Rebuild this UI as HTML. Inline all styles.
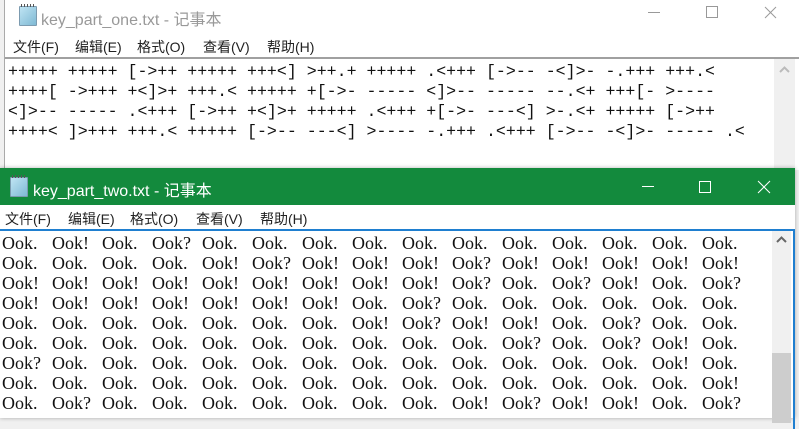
<!DOCTYPE html>
<html><head><meta charset="utf-8"><style>
*{margin:0;padding:0;box-sizing:border-box}
body{width:799px;height:412px;overflow:hidden;background:#f0f0f0;position:relative;font-family:"Liberation Sans","Noto Sans CJK SC",sans-serif}
.w1{position:absolute;left:4px;top:0;width:800px;height:170px;background:#fff;border-left:1px solid #aaa}
.title{position:absolute;left:0;top:0;right:0;height:35px;font-size:16px;color:#999;}
.title span{position:absolute;left:36px;top:6px}
.icon{position:absolute;left:14px;top:6px;width:18px;height:20px;background:linear-gradient(135deg,#bfe4f3,#7fb9d4);border:1px solid #7c9bb0;border-radius:1px}
.icon:before{content:"";position:absolute;left:1px;top:-3px;width:14px;height:3px;background:repeating-linear-gradient(90deg,#555 0 1px,transparent 1px 3px)}
.menu{position:absolute;left:0;right:0;font-size:14px;color:#222;white-space:pre;word-spacing:0}
.menu b{font-weight:normal;position:absolute}
.t1{position:absolute;left:0;top:57px;width:800px;height:113px;border-top:2px solid #a0a0a0;background:#fff}
.t1 pre{position:absolute;left:3px;top:3px;font-family:"Liberation Mono",monospace;font-size:16.6px;line-height:20px;color:#111;letter-spacing:0}
.sb1{position:absolute;left:774px;top:59px;width:21px;height:110px;background:#f0f0f0}
.w2{position:absolute;left:0;top:168px;width:795px;height:250px;background:#fff;box-shadow:0 0 4px rgba(0,0,0,.3)}
.tb2{position:absolute;left:0;top:0;right:0;height:37px;background:#138a3d;color:#fff;font-size:16px}
.tb2 span{position:absolute;left:33px;top:9px}
.m2{position:absolute;top:37px;left:0;right:0;height:24px;background:#fff}
.t2{position:absolute;left:0;top:61px;width:795px;height:200px;border-top:2px solid #1f7fd0;border-right:2px solid #1f7fd0}
.row{position:absolute;left:2px;height:20px;font-family:"Liberation Serif",serif;font-size:18px;color:#111;white-space:nowrap}
.row i{font-style:normal;display:inline-block;width:50px}
.sb2{position:absolute;left:772px;top:63px;width:19px;height:190px;background:#f0f0f0}
.thumb{position:absolute;left:0;top:122px;width:19px;height:70px;background:#cdcdcd}
</style></head><body>
<div class="w1">
 <div class="title"><div class="icon"></div><span>key_part_one.txt - 记事本</span>
  <svg style="position:absolute;left:0;top:0" width="799" height="35"><g stroke="#999" stroke-width="1" fill="none"><line x1="643" y1="12.5" x2="655" y2="12.5"/><rect x="701.5" y="6.5" width="11" height="11"/><line x1="760" y1="7" x2="771" y2="18"/><line x1="771" y1="7" x2="760" y2="18"/></g></svg>
 </div>
 <div class="menu" style="top:37px"><b style="left:8px">文件(F)</b><b style="left:70px">编辑(E)</b><b style="left:132px">格式(O)</b><b style="left:198px">查看(V)</b><b style="left:262px">帮助(H)</b></div>
 <div class="t1"><pre>+++++ +++++ [->++ +++++ +++<] >++.+ +++++ .<+++ [->-- -<]>- -.+++ +++.<
++++[ ->+++ +<]>+ +++.< +++++ +[->- ----- <]>-- ----- --.<+ +++[- >----
<]>-- ----- .<+++ [->++ +<]>+ +++++ .<+++ +[->- ---<] >-.<+ +++++ [->++
++++< ]>+++ +++.< +++++ [->-- ---<] >---- -.+++ .<+++ [->-- -<]>- ----- .<</pre></div>
</div>
<div class="sb1"><svg width="21" height="20"><path d="M6 13 L10.5 8.5 L15 13" stroke="#bbb" stroke-width="2" fill="none"/></svg></div>
<div class="w2">
 <div class="tb2"><div class="icon" style="left:10px;top:9px"></div><span>key_part_two.txt - 记事本</span>
  <svg style="position:absolute;left:0;top:0" width="795" height="37"><g stroke="#fff" stroke-width="1" fill="none"><line x1="642" y1="18.5" x2="654" y2="18.5"/><rect x="699.5" y="13.5" width="11" height="11"/><line x1="758" y1="13" x2="770" y2="25"/><line x1="770" y1="13" x2="758" y2="25"/></g></svg>
 </div>
 <div class="menu m2"><b style="left:5px;top:4px">文件(F)</b><b style="left:68px;top:4px">编辑(E)</b><b style="left:130px;top:4px">格式(O)</b><b style="left:196px;top:4px">查看(V)</b><b style="left:260px;top:4px">帮助(H)</b></div>
 <div class="t2"></div>
 <div class="row" style="top:65px"><i>Ook.</i><i>Ook!</i><i>Ook.</i><i>Ook?</i><i>Ook.</i><i>Ook.</i><i>Ook.</i><i>Ook.</i><i>Ook.</i><i>Ook.</i><i>Ook.</i><i>Ook.</i><i>Ook.</i><i>Ook.</i><i>Ook.</i></div>
 <div class="row" style="top:85px"><i>Ook.</i><i>Ook.</i><i>Ook.</i><i>Ook.</i><i>Ook!</i><i>Ook?</i><i>Ook!</i><i>Ook!</i><i>Ook!</i><i>Ook?</i><i>Ook!</i><i>Ook!</i><i>Ook!</i><i>Ook!</i><i>Ook!</i></div>
 <div class="row" style="top:105px"><i>Ook!</i><i>Ook!</i><i>Ook!</i><i>Ook!</i><i>Ook!</i><i>Ook!</i><i>Ook!</i><i>Ook!</i><i>Ook!</i><i>Ook?</i><i>Ook.</i><i>Ook?</i><i>Ook!</i><i>Ook.</i><i>Ook?</i></div>
 <div class="row" style="top:125px"><i>Ook!</i><i>Ook!</i><i>Ook!</i><i>Ook!</i><i>Ook!</i><i>Ook!</i><i>Ook!</i><i>Ook.</i><i>Ook?</i><i>Ook.</i><i>Ook.</i><i>Ook.</i><i>Ook.</i><i>Ook.</i><i>Ook.</i></div>
 <div class="row" style="top:145px"><i>Ook.</i><i>Ook.</i><i>Ook.</i><i>Ook.</i><i>Ook.</i><i>Ook.</i><i>Ook.</i><i>Ook!</i><i>Ook?</i><i>Ook!</i><i>Ook!</i><i>Ook.</i><i>Ook?</i><i>Ook.</i><i>Ook.</i></div>
 <div class="row" style="top:165px"><i>Ook.</i><i>Ook.</i><i>Ook.</i><i>Ook.</i><i>Ook.</i><i>Ook.</i><i>Ook.</i><i>Ook.</i><i>Ook.</i><i>Ook.</i><i>Ook?</i><i>Ook.</i><i>Ook?</i><i>Ook!</i><i>Ook.</i></div>
 <div class="row" style="top:185px"><i>Ook?</i><i>Ook.</i><i>Ook.</i><i>Ook.</i><i>Ook.</i><i>Ook.</i><i>Ook.</i><i>Ook.</i><i>Ook.</i><i>Ook.</i><i>Ook.</i><i>Ook.</i><i>Ook.</i><i>Ook!</i><i>Ook.</i></div>
 <div class="row" style="top:205px"><i>Ook.</i><i>Ook.</i><i>Ook.</i><i>Ook.</i><i>Ook.</i><i>Ook.</i><i>Ook.</i><i>Ook.</i><i>Ook.</i><i>Ook.</i><i>Ook.</i><i>Ook.</i><i>Ook.</i><i>Ook.</i><i>Ook!</i></div>
 <div class="row" style="top:225px"><i>Ook.</i><i>Ook?</i><i>Ook.</i><i>Ook.</i><i>Ook.</i><i>Ook.</i><i>Ook.</i><i>Ook.</i><i>Ook.</i><i>Ook!</i><i>Ook?</i><i>Ook!</i><i>Ook!</i><i>Ook.</i><i>Ook?</i></div>
 <div class="sb2"><svg width="19" height="20"><path d="M5 11 L9.5 6.5 L14 11" stroke="#666" stroke-width="2" fill="none"/></svg><div class="thumb"></div></div>
</div>
</body></html>
